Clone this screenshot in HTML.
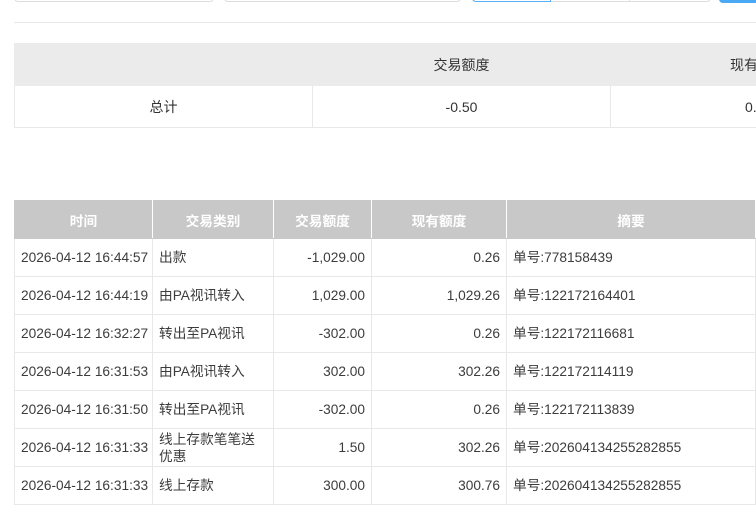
<!DOCTYPE html>
<html><head><meta charset="utf-8"><style>
*{margin:0;padding:0;box-sizing:border-box}
body{width:756px;height:516px;overflow:hidden;background:#fff;font-family:"Liberation Sans","Noto Sans CJK SC",sans-serif;font-size:13.7px;color:#444;position:relative}
.a{position:absolute}
table{border-collapse:collapse;table-layout:fixed;position:absolute}
td,th{border:1px solid #e8e8e8;overflow:hidden;white-space:nowrap}
#s{left:14px;top:43px;width:900px}
#s th{height:42px;background:#ebebeb;font-weight:normal;color:#333;font-size:14px;border-color:#ebebeb}
#s td{height:42px;text-align:center;color:#333;font-size:14px}
#d{left:14px;top:200px;width:741px}
#d th{height:38px;background:#c8c8c8;color:#fff;font-weight:bold;border:1px solid #c8c8c8;border-right-color:#fff}
#d td{height:38px;padding:0 6px;color:#3c3c3c;line-height:17px}
.r{text-align:right}
</style></head><body>
<div class="a" style="left:14px;top:-10px;width:200px;height:12px;border:1px solid #ddd;border-radius:4px"></div>
<div class="a" style="left:224px;top:-10px;width:237px;height:12px;border:1px solid #ddd;border-radius:4px"></div>
<div class="a" style="left:472px;top:-10px;width:239px;height:12px;border:1px solid #ddd;border-radius:4px"></div>
<div class="a" style="left:472px;top:-10px;width:79px;height:12px;border:1px solid #5aaef5;border-radius:4px 0 0 4px"></div>
<div class="a" style="left:629px;top:-10px;width:1px;height:12px;background:#ddd"></div>
<div class="a" style="left:719px;top:-10px;width:40px;height:13px;background:#4aa8f5;border-radius:4px"></div>
<div class="a" style="left:14px;top:22px;width:742px;height:1px;background:#e8e8e8"></div>
<table id="s"><colgroup><col style="width:298px"><col style="width:298px"><col style="width:304px"></colgroup>
<tr><th></th><th>交易额度</th><th style="text-align:left;padding-left:119px">现有额度</th></tr>
<tr><td>总计</td><td>-0.50</td><td style="text-align:left;padding-left:134px">0.26</td></tr></table>
<table id="d"><colgroup><col style="width:138px"><col style="width:121px"><col style="width:98px"><col style="width:135px"><col style="width:249px"></colgroup>
<tr><th>时间</th><th>交易类别</th><th>交易额度</th><th>现有额度</th><th>摘要</th></tr>
<tr><td>2026-04-12 16:44:57</td><td>出款</td><td class="r">-1,029.00</td><td class="r">0.26</td><td>单号:778158439</td></tr>
<tr><td>2026-04-12 16:44:19</td><td>由PA视讯转入</td><td class="r">1,029.00</td><td class="r">1,029.26</td><td>单号:122172164401</td></tr>
<tr><td>2026-04-12 16:32:27</td><td>转出至PA视讯</td><td class="r">-302.00</td><td class="r">0.26</td><td>单号:122172116681</td></tr>
<tr><td>2026-04-12 16:31:53</td><td>由PA视讯转入</td><td class="r">302.00</td><td class="r">302.26</td><td>单号:122172114119</td></tr>
<tr><td>2026-04-12 16:31:50</td><td>转出至PA视讯</td><td class="r">-302.00</td><td class="r">0.26</td><td>单号:122172113839</td></tr>
<tr><td>2026-04-12 16:31:33</td><td style="white-space:normal">线上存款笔笔送<br>优惠</td><td class="r">1.50</td><td class="r">302.26</td><td>单号:202604134255282855</td></tr>
<tr><td>2026-04-12 16:31:33</td><td>线上存款</td><td class="r">300.00</td><td class="r">300.76</td><td>单号:202604134255282855</td></tr>
</table>
</body></html>
